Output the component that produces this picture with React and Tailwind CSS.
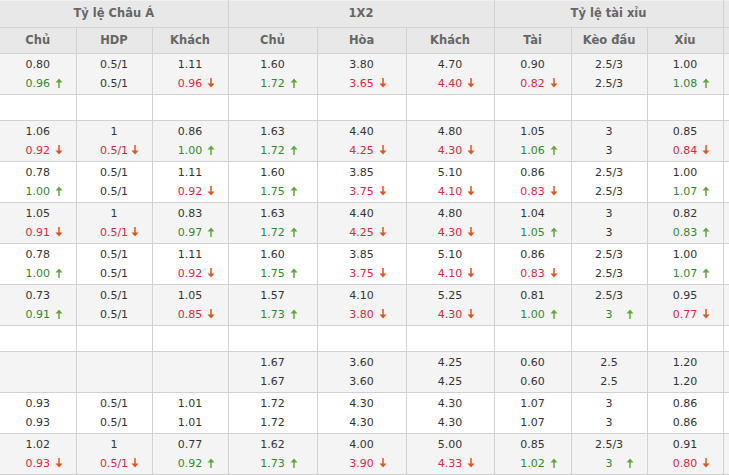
import React from "react";

// each cell: [top, bottom, arrowDir (u/d/null)]
const rows = [
  { bg: "gray", cells: [
    ["0.80", "0.96", "u"], ["0.5/1", "0.5/1"], ["1.11", "0.96", "d"],
    ["1.60", "1.72", "u"], ["3.80", "3.65", "d"], ["4.70", "4.40", "d"],
    ["0.90", "0.82", "d"], ["2.5/3", "2.5/3"], ["1.00", "1.08", "u"],
  ] },
  { empty: true },
  { bg: "gray", cells: [
    ["1.06", "0.92", "d"], ["1", "0.5/1", "d"], ["0.86", "1.00", "u"],
    ["1.63", "1.72", "u"], ["4.40", "4.25", "d"], ["4.80", "4.30", "d"],
    ["1.05", "1.06", "u"], ["3", "3"], ["0.85", "0.84", "d"],
  ] },
  { bg: "white", cells: [
    ["0.78", "1.00", "u"], ["0.5/1", "0.5/1"], ["1.11", "0.92", "d"],
    ["1.60", "1.75", "u"], ["3.85", "3.75", "d"], ["5.10", "4.10", "d"],
    ["0.86", "0.83", "d"], ["2.5/3", "2.5/3"], ["1.00", "1.07", "u"],
  ] },
  { bg: "gray", cells: [
    ["1.05", "0.91", "d"], ["1", "0.5/1", "d"], ["0.83", "0.97", "u"],
    ["1.63", "1.72", "u"], ["4.40", "4.25", "d"], ["4.80", "4.30", "d"],
    ["1.04", "1.05", "u"], ["3", "3"], ["0.82", "0.83", "u"],
  ] },
  { bg: "white", cells: [
    ["0.78", "1.00", "u"], ["0.5/1", "0.5/1"], ["1.11", "0.92", "d"],
    ["1.60", "1.75", "u"], ["3.85", "3.75", "d"], ["5.10", "4.10", "d"],
    ["0.86", "0.83", "d"], ["2.5/3", "2.5/3"], ["1.00", "1.07", "u"],
  ] },
  { bg: "gray", cells: [
    ["0.73", "0.91", "u"], ["0.5/1", "0.5/1"], ["1.05", "0.85", "d"],
    ["1.57", "1.73", "u"], ["4.10", "3.80", "d"], ["5.25", "4.30", "d"],
    ["0.81", "1.00", "u"], ["2.5/3", "3", "u"], ["0.95", "0.77", "d"],
  ] },
  { empty: true },
  { bg: "gray", cells: [
    null, null, null,
    ["1.67", "1.67"], ["3.60", "3.60"], ["4.25", "4.25"],
    ["0.60", "0.60"], ["2.5", "2.5"], ["1.20", "1.20"],
  ] },
  { bg: "white", cells: [
    ["0.93", "0.93"], ["0.5/1", "0.5/1"], ["1.01", "1.01"],
    ["1.72", "1.72"], ["4.30", "4.30"], ["4.30", "4.30"],
    ["1.07", "1.07"], ["3", "3"], ["0.86", "0.86"],
  ] },
  { bg: "gray", cells: [
    ["1.02", "0.93", "d"], ["1", "0.5/1", "d"], ["0.77", "0.92", "u"],
    ["1.62", "1.73", "u"], ["4.00", "3.90", "d"], ["5.00", "4.33", "d"],
    ["0.85", "1.02", "u"], ["2.5/3", "3", "u"], ["0.91", "0.80", "d"],
  ] },
];

function Arrow({ dir }) {
  if (dir === "u") {
    return (
      <svg width="8" height="10" viewBox="0 0 8 10" className="block">
        <polygon points="0.5,4.5 4,0.5 7.5,4.5" fill="#5fa83a" />
        <rect x="3.25" y="3.5" width="1.5" height="6.5" fill="#5fa83a" />
      </svg>
    );
  }
  return (
    <svg width="8" height="10" viewBox="0 0 8 10" className="block">
      <rect x="3.25" y="0" width="1.5" height="6.5" fill="#e2531d" />
      <polygon points="0.5,5.5 4,9.5 7.5,5.5" fill="#e2531d" />
    </svg>
  );
}

const border = "border border-[#d2d2d2]";

function Cell({ data, first }) {
  const cls = `${border} ${first ? "border-l-0" : ""} relative p-0 text-center align-middle`;
  if (!data) return <td className={cls}></td>;
  const [top, bottom, dir] = data;
  const color = dir === "u" ? "text-[#2f8a2c]" : dir === "d" ? "text-[#e3253f]" : "text-[#333333]";
  return (
    <td className={cls}>
      <div className="leading-[19px] text-[#333333]">{top}</div>
      <div className="relative leading-[19px]">
        <span className={color}>{bottom}</span>
        {dir && (
          <span className="absolute left-[calc(50%+17px)] top-[4px]">
            <Arrow dir={dir} />
          </span>
        )}
      </div>
    </td>
  );
}

export default function App() {
  const widths = [76, 76, 76, 89, 89, 88, 77, 76, 76, 100];
  const sub = ["Chủ", "HDP", "Khách", "Chủ", "Hòa", "Khách", "Tài", "Kèo đầu", "Xỉu"];
  const headCls = "text-[11.5px] font-bold text-[#666666]";
  return (
    <div className="w-[729px] h-[475px] overflow-hidden bg-white">
      <table
        className="table-fixed border-collapse text-[11px] font-['DejaVu_Sans',sans-serif]"
        style={{ width: widths.reduce((a, b) => a + b, 0) }}
      >
        <colgroup>
          {widths.map((w, i) => (
            <col key={i} style={{ width: w }} />
          ))}
        </colgroup>
        <thead>
          <tr className="h-[27px] bg-[#e8e8e8]">
            <th colSpan={3} className={`${border} border-l-0 border-t-[#f0f0f0] ${headCls}`}>Tỷ lệ Châu Á</th>
            <th colSpan={3} className={`${border} border-t-[#f0f0f0] ${headCls}`}>1X2</th>
            <th colSpan={3} className={`${border} border-t-[#f0f0f0] ${headCls}`}>Tỷ lệ tài xỉu</th>
            <th className={`${border} border-t-[#f0f0f0]`}></th>
          </tr>
          <tr className="h-[26px] bg-[#e8e8e8]">
            {sub.map((s, i) => (
              <th key={i} className={`${border} ${i === 0 ? "border-l-0" : ""} ${headCls}`}>{s}</th>
            ))}
            <th className={border}></th>
          </tr>
        </thead>
        <tbody>
          {rows.map((r, ri) => {
            if (r.empty) {
              return (
                <tr key={ri} className="h-[26px] bg-white">
                  {widths.map((_, i) => (
                    <td key={i} className={`${border} ${i === 0 ? "border-l-0" : ""}`}></td>
                  ))}
                </tr>
              );
            }
            return (
              <tr key={ri} className={`h-[41px] ${r.bg === "gray" ? "bg-[#f4f4f4]" : "bg-white"}`}>
                {r.cells.map((c, i) => (
                  <Cell key={i} data={c} first={i === 0} />
                ))}
                <td className={border}></td>
              </tr>
            );
          })}
        </tbody>
      </table>
    </div>
  );
}
